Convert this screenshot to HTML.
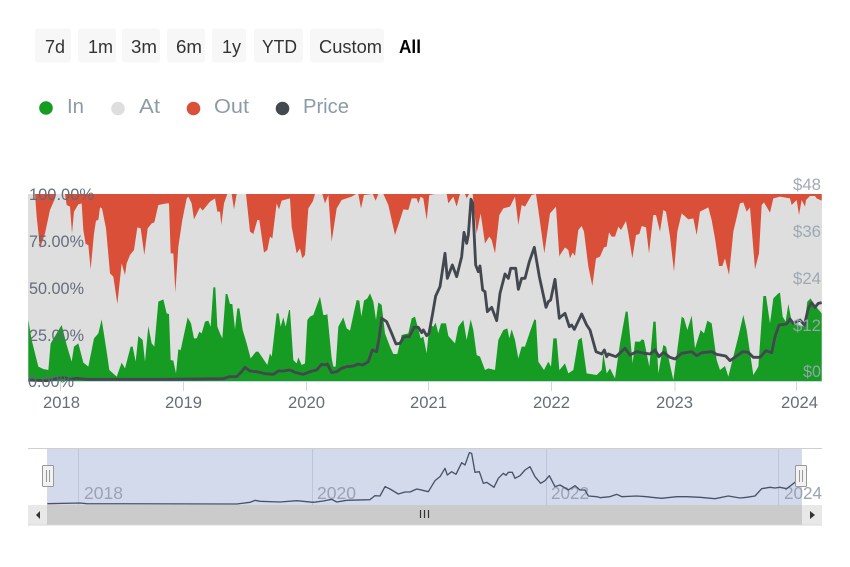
<!DOCTYPE html>
<html><head><meta charset="utf-8"><style>
html,body{margin:0;padding:0;background:#fff;width:850px;height:567px;overflow:hidden}
svg{display:block;filter:blur(.35px)}
text{font-family:"Liberation Sans",sans-serif}
.b{fill:#f7f7f7}
.bt{font-size:18px;fill:#333}
.lg{font-size:20.500px;fill:#8d9ba8}
.yl{font-size:17px;fill:#5d6878;opacity:.95}
.yr{font-size:17px;fill:#99a6b2;opacity:.95}
.xl{font-size:16.500px;fill:#666f78}
.nl{font-size:17.500px;fill:#9aa3b5}
.r{fill:#d94f37}.g{fill:#169c23}
.p{fill:none;stroke:#43474f;stroke-width:8.500;stroke-linejoin:round;stroke-linecap:butt}
.n{fill:none;stroke:#46536a;stroke-width:4;stroke-linejoin:round}
</style></head><body>
<svg width="850" height="567" viewBox="0 0 850 567" xmlns="http://www.w3.org/2000/svg">
<rect width="850" height="567" fill="#fff"/>
<rect class="b" x="35" y="28.500" width="36" height="34" rx="3"/>
<rect class="b" x="78" y="28.500" width="38" height="34" rx="3"/>
<rect class="b" x="122" y="28.500" width="38" height="34" rx="3"/>
<rect class="b" x="167" y="28.500" width="38" height="34" rx="3"/>
<rect class="b" x="212" y="28.500" width="34" height="34" rx="3"/>
<rect class="b" x="254" y="28.500" width="49" height="34" rx="3"/>
<rect class="b" x="310" y="28.500" width="74" height="34" rx="3"/>
<text class="bt" x="45" y="53" textLength="20" lengthAdjust="spacingAndGlyphs">7d</text>
<text class="bt" x="88" y="53" textLength="25" lengthAdjust="spacing">1m</text>
<text class="bt" x="131" y="53" textLength="26" lengthAdjust="spacingAndGlyphs">3m</text>
<text class="bt" x="176" y="53" textLength="26" lengthAdjust="spacingAndGlyphs">6m</text>
<text class="bt" x="222" y="53" textLength="19" lengthAdjust="spacing">1y</text>
<text class="bt" x="262" y="53" textLength="35" lengthAdjust="spacingAndGlyphs">YTD</text>
<text class="bt" x="319" y="53" textLength="63" lengthAdjust="spacingAndGlyphs">Custom</text>
<text x="399" y="53" font-size="18" font-weight="700" fill="#000" textLength="22" lengthAdjust="spacingAndGlyphs">All</text>

<circle cx="46" cy="108" r="6.800" fill="#169c23"/>
<circle cx="118" cy="108.500" r="6.800" fill="#dedede"/>
<circle cx="193.500" cy="108.500" r="6.800" fill="#da4f37"/>
<circle cx="282.500" cy="108.500" r="6.800" fill="#43494f"/>
<text class="lg" x="67" y="113" textLength="17" lengthAdjust="spacingAndGlyphs">In</text>
<text class="lg" x="139" y="113" textLength="21" lengthAdjust="spacingAndGlyphs">At</text>
<text class="lg" x="214" y="113" textLength="35" lengthAdjust="spacingAndGlyphs">Out</text>
<text class="lg" x="303" y="113" textLength="46" lengthAdjust="spacingAndGlyphs">Price</text>

<rect x="28" y="194" width="794" height="187" fill="#dedede"/>
<g transform="translate(20 170) scale(.33333)">
<polygon class="r" points="45,72 50,140 60,235 75,190 90,120 103,90 108,72 135,72 140,105 150,110 156,190 162,125 175,103 185,100 190,180 197,222 205,225 212,298 222,190 228,152 235,150 240,112 246,115 258,175 270,310 280,320 292,402 305,280 315,315 320,280 330,255 342,240 352,172 362,175 373,255 383,175 395,160 403,157 415,105 440,100 447,100 452,250 460,250 466,368 475,230 487,150 500,85 505,80 515,100 522,148 540,112 548,122 570,95 585,85 592,125 600,125 604,165 612,100 622,72 635,72 642,118 650,72 678,72 690,185 700,192 712,150 718,150 732,248 742,240 750,200 757,205 770,100 777,118 785,92 810,85 810,72"/>
<polygon class="g" points="25,633 25,450 35,510 55,590 70,597 85,600 92,520 110,490 125,465 140,525 155,575 162,530 175,520 190,578 205,590 222,505 235,490 245,448 260,545 268,600 290,620 305,578 315,595 332,530 338,530 347,575 355,498 368,510 375,575 385,468 395,520 403,530 415,395 430,388 440,430 447,432 452,570 460,572 468,610 475,538 482,540 503,442 513,460 522,505 530,505 538,485 545,490 555,455 565,452 572,470 580,352 586,352 592,470 600,490 607,505 617,372 622,372 630,402 637,402 645,478 652,415 658,415 668,480 680,520 692,565 708,545 715,545 742,585 750,550 755,560 770,430 776,430 782,470 790,442 797,470 807,420 810,420 810,633"/>
</g>
<g transform="translate(290 170) scale(.33333)">
<polygon class="r" points="0,85 5,170 20,250 30,235 37,265 45,255 55,115 68,95 75,72 97,72 105,100 115,75 125,215 140,115 155,90 185,80 198,72 205,72 213,115 222,75 248,72 257,92 265,72 280,72 295,105 315,195 330,150 340,118 355,120 365,85 380,85 385,100 392,80 400,85 410,150 418,75 435,72 470,72 475,100 490,80 500,110 510,72 525,72 530,85 537,72 548,72 560,190 572,130 585,220 598,200 605,210 615,250 628,135 640,115 660,110 675,80 685,165 695,105 705,110 725,75 738,72 745,120 763,250 780,130 798,110 808,260 810,255 810,72 0,72"/>
<polygon class="g" points="0,633 0,420 10,570 20,580 25,562 35,585 45,580 52,450 60,440 70,435 90,380 100,435 107,435 112,432 125,565 130,590 137,590 145,470 160,442 170,475 180,482 190,435 200,390 208,392 214,440 222,392 232,385 240,370 250,395 258,450 265,397 275,405 285,490 300,530 310,552 322,552 335,495 355,490 365,445 375,440 392,505 400,500 410,550 418,465 430,470 437,458 445,490 453,460 468,460 475,498 495,520 505,470 520,450 530,510 542,448 550,480 560,555 570,560 585,600 595,595 615,600 625,510 640,480 652,475 658,505 665,478 675,510 685,565 695,530 705,530 720,485 733,448 738,450 745,575 762,600 775,575 783,590 790,505 800,505 808,600 810,598 810,633"/>
</g>
<g transform="translate(560 170) scale(.33333)">
<polygon class="r" points="0,255 15,232 25,240 30,265 38,248 45,258 55,180 65,168 72,185 85,290 97,348 108,265 120,260 132,232 140,230 147,187 155,200 165,200 175,170 183,180 198,153 205,190 217,265 228,195 238,192 245,168 258,172 267,250 280,135 288,135 300,185 310,120 318,125 330,200 342,305 352,185 365,130 385,148 400,145 410,195 420,125 445,112 455,150 465,205 477,288 487,288 495,265 507,315 520,185 540,100 550,97 560,125 570,112 585,298 597,250 605,105 612,97 630,128 640,85 660,80 690,85 695,105 710,90 717,135 725,90 735,110 738,90 750,78 765,78 770,85 785,92 785,72 0,72"/>
<polygon class="g" points="0,633 0,598 15,580 25,610 40,600 55,510 65,503 80,610 110,615 125,600 130,550 140,610 150,595 165,625 180,520 197,425 203,425 218,580 225,515 240,515 245,508 252,510 268,590 280,455 287,455 295,610 310,525 318,530 340,630 365,440 372,445 382,480 395,437 405,535 422,480 432,490 442,452 455,460 470,570 480,600 495,588 505,620 535,500 550,435 560,480 580,615 595,590 610,378 618,378 630,460 640,385 655,370 660,368 668,440 677,455 685,402 695,455 715,465 733,470 742,395 752,385 760,400 775,418 785,430 785,633"/>
</g>
<line x1="28" y1="381.500" x2="822" y2="381.500" stroke="#ccd6eb"/>
<g stroke="#ccd6eb"><line x1="60.500" y1="382" x2="60.500" y2="391"/><line x1="183.500" y1="382" x2="183.500" y2="391"/><line x1="306.500" y1="382" x2="306.500" y2="391"/><line x1="428.500" y1="382" x2="428.500" y2="391"/><line x1="551.500" y1="382" x2="551.500" y2="391"/><line x1="675" y1="382" x2="675" y2="391"/><line x1="796.500" y1="382" x2="796.500" y2="391"/></g>
<g transform="translate(20 170) scale(.33333)"><polyline class="p" points="25,630 80,632 130,622 150,628 170,625 200,628 300,628 440,628 610,626 630,620 650,620 665,605 675,592 690,603 710,605 735,611 760,613 775,603 790,603 808,600 810,600"/></g>
<g transform="translate(290 170) scale(.33333)"><polyline class="p" points="0,600 15,607 40,613 60,605 80,600 95,583 105,585 112,582 125,608 140,605 155,595 170,590 190,588 205,582 218,585 235,575 247,540 260,545 268,500 275,445 290,455 305,490 318,522 330,520 342,500 358,500 372,472 385,472 395,488 400,480 410,497 417,490 428,430 437,378 450,350 465,250 472,325 487,285 500,320 515,260 522,187 530,220 535,195 543,88 548,100 557,285 565,305 570,288 578,360 585,365 592,425 605,412 620,452 630,370 645,312 655,325 662,295 677,295 685,358 695,325 705,325 718,275 733,232 748,320 768,412 775,395 782,390 795,328 808,445 810,442"/></g>
<g transform="translate(560 170) scale(.33333)"><polyline class="p" points="0,442 15,430 28,470 35,465 43,478 65,432 80,465 90,480 108,545 125,552 133,540 140,560 145,552 168,560 195,535 210,555 230,545 255,550 270,552 285,540 297,560 310,547 330,562 345,567 365,550 395,545 410,557 425,548 455,545 470,553 497,558 510,572 530,558 548,545 565,547 580,562 600,562 618,542 635,548 645,500 657,465 680,462 690,447 700,460 720,450 733,465 745,415 755,398 765,412 775,400 785,398"/></g>

<text class="yl" x="29" y="200" textLength="65" lengthAdjust="spacingAndGlyphs">100.00%</text>
<text class="yl" x="29" y="247" textLength="55" lengthAdjust="spacingAndGlyphs">75.00%</text>
<text class="yl" x="29" y="294" textLength="55" lengthAdjust="spacingAndGlyphs">50.00%</text>
<text class="yl" x="29" y="341" textLength="55" lengthAdjust="spacingAndGlyphs">25.00%</text>
<text class="yl" x="28" y="387" textLength="46" lengthAdjust="spacingAndGlyphs">0.00%</text>
<text class="yr" x="793" y="190" textLength="28" lengthAdjust="spacingAndGlyphs">$48</text>
<text class="yr" x="793" y="237" textLength="28" lengthAdjust="spacingAndGlyphs">$36</text>
<text class="yr" x="793" y="284" textLength="28" lengthAdjust="spacingAndGlyphs">$24</text>
<text class="yr" x="793" y="331" textLength="28" lengthAdjust="spacingAndGlyphs">$12</text>
<text class="yr" x="803" y="377" textLength="18" lengthAdjust="spacingAndGlyphs">$0</text>
<text class="xl" x="43" y="408" textLength="37" lengthAdjust="spacingAndGlyphs">2018</text>
<text class="xl" x="165" y="408" textLength="37" lengthAdjust="spacingAndGlyphs">2019</text>
<text class="xl" x="288" y="408" textLength="37" lengthAdjust="spacingAndGlyphs">2020</text>
<text class="xl" x="410" y="408" textLength="37" lengthAdjust="spacingAndGlyphs">2021</text>
<text class="xl" x="533" y="408" textLength="37" lengthAdjust="spacingAndGlyphs">2022</text>
<text class="xl" x="656" y="408" textLength="37" lengthAdjust="spacingAndGlyphs">2023</text>
<text class="xl" x="781" y="408" textLength="37" lengthAdjust="spacingAndGlyphs">2024</text>

<rect x="47" y="449" width="755" height="56" fill="#d2daeb"/>
<line x1="28" y1="448.500" x2="822" y2="448.500" stroke="#cfcfcf"/>
<g stroke="#bcc6d8"><line x1="78.500" y1="449" x2="78.500" y2="505"/><line x1="312.500" y1="449" x2="312.500" y2="505"/><line x1="546.500" y1="449" x2="546.500" y2="505"/><line x1="778.500" y1="449" x2="778.500" y2="505"/></g>
<text class="nl" x="84" y="499" textLength="39" lengthAdjust="spacingAndGlyphs">2018</text>
<text class="nl" x="317" y="499" textLength="39" lengthAdjust="spacingAndGlyphs">2020</text>
<text class="nl" x="551" y="499" textLength="38" lengthAdjust="spacingAndGlyphs">2022</text>
<text class="nl" x="784" y="499" textLength="38" lengthAdjust="spacingAndGlyphs">2024</text>
<g transform="translate(20 440) scale(.33333)"><polyline class="n" points="82,191 180,189 200,191 650,192 690,187 705,181 720,184 780,186 830,182 880,187 910,183 935,178 950,186 980,181 1050,179 1065,167 1080,168 1095,140 1110,147 1135,162 1155,156 1170,156 1190,147 1200,149"/></g>
<g transform="translate(420 440) scale(.33333)"><polyline class="n" points="0,149 25,155 45,122 60,110 75,85 82,105 95,95 108,103 125,68 135,75 148,38 155,40 165,97 178,95 190,130 200,127 222,142 235,115 250,100 258,106 265,97 277,97 285,115 300,107 315,90 330,80 345,110 362,130 375,122 388,107 405,140 420,135 445,150 465,137 480,150 495,150 505,168 530,170 540,173 570,170 590,163 605,170 650,168 680,170 695,172 725,175 770,170 800,170 840,172 885,176 925,168 960,174 980,172 1005,168 1025,146 1050,142 1065,144 1080,142 1100,146 1125,127 1140,125"/></g>

<rect x="28" y="505" width="794" height="20" fill="#cbcbcb"/>
<rect x="28" y="505" width="19" height="20" fill="#e8e8e8"/>
<rect x="802" y="505" width="20" height="20" fill="#e8e8e8"/>
<line x1="28" y1="525" x2="822" y2="525" stroke="#d8d8d8"/>
<polygon points="40,511 40,519 36,515" fill="#333"/>
<polygon points="810,511 810,519 815,515" fill="#333"/>
<g stroke="#333" stroke-width="1.200"><line x1="420.500" y1="510" x2="420.500" y2="518"/><line x1="424.500" y1="510" x2="424.500" y2="518"/><line x1="428.500" y1="510" x2="428.500" y2="518"/></g>

<rect x="42.500" y="465.500" width="11" height="21" rx="1" fill="#f2f2f2" stroke="#999"/>
<line x1="46.500" y1="470" x2="46.500" y2="482" stroke="#999"/><line x1="49.500" y1="470" x2="49.500" y2="482" stroke="#999"/>
<rect x="795.500" y="465.500" width="11" height="21" rx="1" fill="#f2f2f2" stroke="#999"/>
<line x1="799.500" y1="470" x2="799.500" y2="482" stroke="#999"/><line x1="802.500" y1="470" x2="802.500" y2="482" stroke="#999"/>
</svg>
</body></html>
